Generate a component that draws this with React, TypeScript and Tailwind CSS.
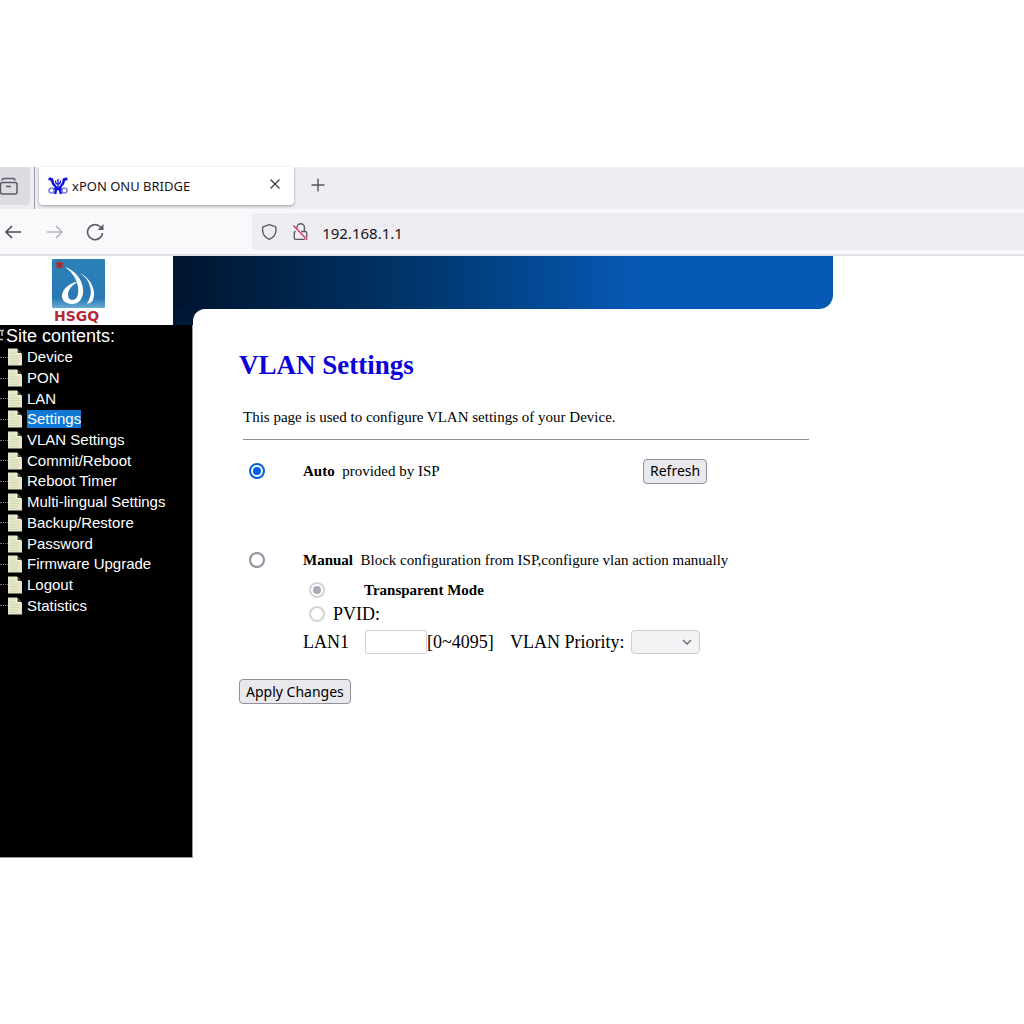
import { useState } from "react";

const menuItems = [
  "Device",
  "PON",
  "LAN",
  "Settings",
  "VLAN Settings",
  "Commit/Reboot",
  "Reboot Timer",
  "Multi-lingual Settings",
  "Backup/Restore",
  "Password",
  "Firmware Upgrade",
  "Logout",
  "Statistics",
];

const radioClass =
  "m-0 size-4 shrink-0 appearance-none rounded-full border-2 border-[#8f8f9d] bg-white bg-clip-content p-[2px] checked:border-[#0060df] checked:bg-[#0060df] disabled:border-[#d2d2d8] disabled:checked:border-[#d2d2d8] disabled:checked:bg-[#a9a9b4]";

const buttonClass =
  "h-[25px] rounded-[4px] border border-[#8f8f9d] bg-[#e9e9ed] px-[6px] font-['Noto_Sans','Open_Sans',sans-serif] text-[14px] leading-[22px] text-black";

function PageIcon() {
  return (
    <svg className="h-[18px] w-[14px] shrink-0" viewBox="0 0 14 18" aria-hidden="true">
      <path d="M0 0.500h9l5 5V17.500H0z" fill="#e6e6c8" />
      <path d="M9 0.500v5h5z" fill="#3d3d32" />
      <path d="M9 1v4.500h4" fill="none" stroke="#fbfbe6" />
      <path d="M2 5h5M2 8h9M2 10.500h9M2 13h9M2 15.500h7" stroke="#d2d2b2" strokeWidth="0.8" />
    </svg>
  );
}

function Favicon() {
  return (
    <svg className="h-[18px] w-5" viewBox="0 0 20 18" fill="none" stroke="#1414d8" aria-hidden="true">
      <path d="M0.500 2l3.500 0.500 1 4 3.500 4.500-1.500 6M19.500 2l-3.500 0.500-1 4-3.500 4.500 1.500 6" strokeWidth="2.600" />
      <path d="M2 0.500l2 4M18 0.500l-2 4" strokeWidth="1.600" />
      <path d="M6 12h8" strokeWidth="2.400" />
      <path d="M7.500 3.500c0 5 5 5 5 0M10 2v9" strokeWidth="1.300" />
      <circle cx="3.500" cy="13.500" r="2.500" strokeWidth="1.500" stroke="#7c7cf2" />
      <circle cx="16.500" cy="13.500" r="2.500" strokeWidth="1.500" stroke="#7c7cf2" />
    </svg>
  );
}

function Logo() {
  return (
    <svg className="mt-[3px] h-16 w-[53px]" viewBox="0 0 53 64" role="img" aria-label="HSGQ">
      <defs>
        <linearGradient id="logoSky" x1="0" y1="0" x2="0" y2="1">
          <stop offset="0" stopColor="#2b82b8" />
          <stop offset="0.8" stopColor="#2a78b4" />
          <stop offset="1" stopColor="#6aaad3" />
        </linearGradient>
      </defs>
      <rect width="53" height="49" rx="1" fill="url(#logoSky)" />
      <path d="M7.500 2v8M4 4l7 4M4 8l7-4" stroke="#b3262f" strokeWidth="2" />
      <path
        d="M13 8c9 3 17 11 18 22 1 9-4 15-11 15-6 0-11-4-10-9 1-7 8-12 17-14-8 5-11 9-11 14 0 3 2 5 4 5 5 0 7-5 6-13C25 20 20 13 13 8z"
        fill="#fff"
      />
      <path d="M28 14c10 5 17 17 13 27-1 2-3 3-6 4 3-6 5-11 3-17-1-6-5-10-10-14z" fill="#fff" />
      <path d="M33 19c4 5 5 12 2 18" fill="none" stroke="#2a78b4" strokeWidth="0.800" />
      <text
        x="2"
        y="62"
        fill="#b32a35"
        className="font-['DejaVu_Sans',sans-serif] text-[14px] font-bold"
      >
        HSGQ
      </text>
    </svg>
  );
}

function BrowserBar() {
  return (
    <header className="font-['Noto_Sans','Open_Sans',sans-serif] text-[#15141a]">
      <div className="flex h-[42px] items-start bg-[#eeedf2]">
        <button type="button" aria-label="Recent tabs" className="flex h-[38px] w-[30px] items-center rounded-br-[4px] bg-[#dddce3]">
          <svg className="h-5 w-[18px]" viewBox="0 0 18 20" fill="none" stroke="#5b5b66" strokeWidth="1.500">
            <path d="M2 4.500q0-2 2-2h9q2 0 2 2" />
            <rect x="0.500" y="6.500" width="16.500" height="11.500" rx="2" />
            <path d="M6 10.500h5" />
          </svg>
        </button>
        <div className="ml-1 h-[42px] w-px bg-[#9c9ca6]" />
        <div className="ml-1 flex h-[38px] w-[255px] items-center rounded-b-[4px] bg-white pl-[9px] pr-[11px] shadow-[0_1px_3px_rgba(0,0,0,0.35)]">
          <Favicon />
          <span className="ml-1 flex-1 text-[13px] leading-5">xPON ONU BRIDGE</span>
          <button type="button" aria-label="Close tab" className="mb-1">
            <svg className="size-4" viewBox="0 0 16 16" fill="none" stroke="#3d3d46" strokeWidth="1.300">
              <path d="M3.500 3.500l9 9M12.500 3.500l-9 9" />
            </svg>
          </button>
        </div>
        <button type="button" aria-label="New tab" className="ml-4 flex h-9 items-center">
          <svg className="size-4" viewBox="0 0 16 16" fill="none" stroke="#55555f" strokeWidth="1.400">
            <path d="M8 1.500v13M1.500 8h13" />
          </svg>
        </button>
      </div>
      <div className="flex h-[47px] items-center border-b-2 border-[#e2e1e8] bg-[#f9f9fb]">
        <button type="button" aria-label="Back" className="ml-1">
          <svg className="h-4 w-[18px]" viewBox="0 0 18 16" fill="none" stroke="#4a4a55" strokeWidth="1.600">
            <path d="M17 8H2M8 2L2 8l6 6" />
          </svg>
        </button>
        <button type="button" aria-label="Forward" className="ml-6" disabled>
          <svg className="h-4 w-[18px]" viewBox="0 0 18 16" fill="none" stroke="#b4b4bc" strokeWidth="1.600">
            <path d="M1 8h15M10 2l6 6-6 6" />
          </svg>
        </button>
        <button type="button" aria-label="Reload" className="ml-[22px]">
          <svg className="h-[18px] w-[19px]" viewBox="0 0 19 18" fill="none" stroke="#5b5b66" strokeWidth="1.600">
            <path d="M14.500 4A7.500 7.500 0 1 0 16.500 10" />
            <path d="M17.500 1v6h-6z" fill="#5b5b66" stroke="none" />
          </svg>
        </button>
        <div className="ml-[147px] flex h-[37px] flex-1 items-center rounded-l-[4px] bg-[#eeedf2] pl-[9px]">
          <svg className="size-[18px]" viewBox="0 0 18 18" fill="none" stroke="#5b5b66" strokeWidth="1.500" aria-hidden="true">
            <path d="M9 1l7 2.500c1 6-1 11-7 13.500C3 14.500 1 9.500 2 3.500z" strokeLinejoin="round" />
          </svg>
          <svg className="ml-[14px] h-5 w-[18px]" viewBox="0 0 18 20" fill="none" stroke="#5b5b66" strokeWidth="1.500" aria-hidden="true">
            <path d="M5.500 6V5a4 4 0 0 1 8 0v4" />
            <path d="M10 9.500h4.500q1.500 0 1.500 1.500v5M4 9.500q-1.500 0-1.500 1.500v5.500q0 1.500 1.500 1.500h10" />
            <path d="M1.500 3l15 15.500" stroke="#e0315f" />
          </svg>
          <input
            aria-label="Address"
            defaultValue="192.168.1.1"
            className="ml-[14px] w-full bg-transparent pt-[2px] text-[15px] leading-6 outline-none"
          />
        </div>
      </div>
    </header>
  );
}

function Sidebar() {
  return (
    <nav className="h-[533px] w-[193px] shrink-0 overflow-hidden border-b border-r border-[#9a9a9a] bg-black font-['Liberation_Sans',Arial,sans-serif] text-white">
      <div className="flex h-[22px] items-center">
        <svg className="h-4 w-[6px] shrink-0" viewBox="0 0 6 16" fill="none" aria-hidden="true">
          <path d="M0 2.500h4M0 11.500h3M2 3v5" stroke="#c4c4c4" strokeWidth="1.500" />
        </svg>
        <span className="text-[18px] leading-6">Site contents:</span>
      </div>
      <ul className="flex h-[269px] flex-col">
        {menuItems.map((item) => (
          <li key={item} className="flex flex-1 items-center">
            <span className="w-[8px] shrink-0 border-t border-dotted border-[#777]" />
            <PageIcon />
            <a
              href="#"
              className={item === "Settings" ? "ml-[5px] bg-[#0f78d4] text-[15px] leading-[18px]" : "ml-[5px] text-[15px] leading-[18px]"}
            >
              {item}
            </a>
          </li>
        ))}
      </ul>
    </nav>
  );
}

function VlanForm() {
  const [mode, setMode] = useState("auto");

  return (
    <form className="mt-3 w-[570px] text-[15px] leading-5" onSubmit={(e) => e.preventDefault()}>
      <hr className="ml-1 border-t border-[#8e8e8e]" />

      <div className="mt-[19px] flex h-6 items-center pl-[10px]">
        <input
          id="auto"
          type="radio"
          name="mode"
          className={radioClass}
          checked={mode === "auto"}
          onChange={() => setMode("auto")}
        />
        <label htmlFor="auto" className="ml-[38px] w-[340px]">
          <b>Auto</b>&nbsp; provided by ISP
        </label>
        <button type="button" className={buttonClass}>Refresh</button>
      </div>

      <div className="mt-[65px] flex h-6 items-center pl-[10px]">
        <input
          id="manual"
          type="radio"
          name="mode"
          className={radioClass}
          checked={mode === "manual"}
          onChange={() => setMode("manual")}
        />
        <label htmlFor="manual" className="ml-[38px]">
          <b>Manual</b>&nbsp; Block configuration from ISP,configure vlan action manually
        </label>
      </div>

      <div className="mt-[6px] flex h-6 items-center pl-[70px]">
        <input id="transparent" type="radio" name="vlan" className={radioClass} defaultChecked disabled />
        <label htmlFor="transparent" className="ml-[39px] font-bold">Transparent Mode</label>
      </div>
      <div className="flex h-6 items-center pl-[70px]">
        <input id="pvid" type="radio" name="vlan" className={radioClass} disabled />
        <label htmlFor="pvid" className="ml-2 text-[18px]">PVID:</label>
      </div>
      <div className="mt-1 flex h-6 items-center pl-[64px] text-[18px]">
        <label htmlFor="lan1" className="w-[62px]">LAN1</label>
        <input id="lan1" type="text" disabled className="h-6 w-[62px] rounded-[2px] border border-[#d0d0d6] bg-white" />
        <span className="w-[83px]">[0~4095]</span>
        <label htmlFor="priority" className="w-[121px]">VLAN Priority:</label>
        <span className="relative">
          <select
            id="priority"
            disabled
            className="block h-6 w-[69px] appearance-none rounded-[4px] border border-[#ccccd2] bg-[#f3f3f5]"
          />
          <svg className="absolute right-2 top-2 h-2 w-[10px]" viewBox="0 0 10 8" fill="none" stroke="#6b6b74" strokeWidth="1.500" aria-hidden="true">
            <path d="M1 2l4 4 4-4" />
          </svg>
        </span>
      </div>

      <button type="submit" className={`${buttonClass} mt-[25px]`}>Apply Changes</button>
    </form>
  );
}

export default function App() {
  return (
    <div className="min-h-screen bg-white pt-[167px]">
      <BrowserBar />

      <div className="flex h-[69px]">
        <div className="flex w-[173px] shrink-0 justify-center pr-4">
          <Logo />
        </div>
        <div className="flex-1">
          <div className="h-[53px] max-w-[660px] rounded-br-[14px] bg-linear-to-r from-[#00142f] via-[#003468] via-35% to-[#0759b6] to-70%" />
          <div className="h-4 w-10 bg-[#001838] pl-5">
            <div className="h-full rounded-tl-[12px] bg-white" />
          </div>
        </div>
      </div>

      <div className="flex">
        <Sidebar />
        <main className="flex-1 pl-[46px] pt-6 font-['Liberation_Serif','Times_New_Roman',serif] text-black">
          <h1 className="text-[27px] font-bold leading-8 text-[#0b00d8]">VLAN Settings</h1>
          <p className="ml-1 mt-[26px] text-[15px] leading-5">
            This page is used to configure VLAN settings of your Device.
          </p>
          <VlanForm />
        </main>
      </div>
    </div>
  );
}
